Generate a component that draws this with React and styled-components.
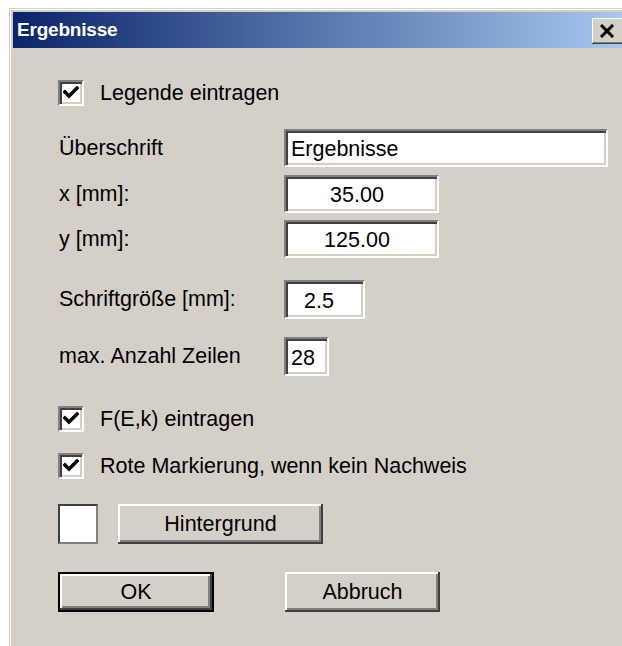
import React from 'react';
import styled, { createGlobalStyle } from 'styled-components';

const GlobalStyle = createGlobalStyle`
  html, body {
    margin: 0;
    padding: 0;
    background: #ffffff;
    overflow: hidden;
  }
  body {
    font-family: "Liberation Sans", Arial, sans-serif;
  }
`;

const Window = styled.div`
  margin: 8px 0 0 9px;
  width: 624px;
  height: calc(100vh - 8px);
  box-sizing: border-box;
  background: #d4d0c8;
  border: 1px solid #d4d0c8;
  border-bottom: none;
  box-shadow: inset 1px 1px #ffffff;
  padding: 3px 3px 0;
`;

const TitleBar = styled.div`
  height: 36px;
  display: flex;
  align-items: center;
  justify-content: space-between;
  padding: 0 3px 0 4px;
  background: linear-gradient(to right, #0a246a, #a6caf0);
`;

const Title = styled.span`
  color: #ffffff;
  font-weight: bold;
  font-size: 19px;
  letter-spacing: -0.2px;
`;

const CloseButton = styled.div`
  width: 34px;
  height: 26px;
  margin-top: 1px;
  box-sizing: border-box;
  background: #d4d0c8;
  display: flex;
  align-items: center;
  justify-content: flex-start;
  padding-left: 7px;
  box-shadow: inset -1px -1px #404040, inset 1px 1px #ffffff,
    inset -2px -2px #808080;
`;

const Content = styled.div`
  display: flex;
  flex-direction: column;
  padding: 32px 0 0 45px;
  font-size: 21.5px;
  color: #000000;
`;

const Row = styled.div`
  display: flex;
  align-items: center;
  margin-top: ${(p) => p.$gap || 0}px;
  height: ${(p) => p.$height || 38}px;
`;

const FieldRow = styled(Row)`
  display: grid;
  grid-template-columns: 226px auto;
`;

const Label = styled.span`
  padding-left: 1px;
  white-space: nowrap;
`;

const Box = styled.div`
  width: 26px;
  height: 26px;
  box-sizing: border-box;
  background: #ffffff;
  border: 2px solid;
  border-color: #808080 #ffffff #ffffff #808080;
  box-shadow: inset 2px 2px #404040, inset -2px -2px #d4d0c8;
  display: flex;
  align-items: center;
  justify-content: center;
  flex-shrink: 0;
`;

const CheckText = styled.span`
  margin-left: 16px;
  white-space: nowrap;
`;

const Field = styled.input`
  width: ${(p) => p.$width}px;
  height: ${(p) => p.$height || 38}px;
  box-sizing: border-box;
  margin: 0;
  background: #ffffff;
  border: 2px solid;
  border-color: #808080 #ffffff #ffffff #808080;
  box-shadow: inset 2px 2px #404040, inset -2px -2px #d4d0c8;
  font-family: "Liberation Sans", Arial, sans-serif;
  font-size: 21.5px;
  color: #000000;
  text-align: ${(p) => p.$align || 'left'};
  padding: 3px ${(p) => p.$padRight || 2}px 0 5px;
  outline: none;
`;

const Swatch = styled.div`
  width: 40px;
  height: 40px;
  box-sizing: border-box;
  background: #ffffff;
  border: 2px solid;
  border-color: #404040 #808080 #808080 #404040;
`;

const Button = styled.div`
  width: ${(p) => p.$width}px;
  height: 40px;
  box-sizing: border-box;
  margin-left: ${(p) => p.$offset || 0}px;
  background: #d4d0c8;
  display: flex;
  align-items: center;
  justify-content: center;
  border: ${(p) => (p.$default ? '2px solid #000000' : 'none')};
  box-shadow: inset -2px -2px #404040, inset 2px 2px #ffffff,
    inset -4px -4px #808080;
  white-space: nowrap;
`;

const Check = () => (
  <svg width="16" height="14" viewBox="0 0 16 14">
    <path d="M2 6 L6 10 L14 2" stroke="#000" strokeWidth="3.4" fill="none" strokeLinecap="square" />
  </svg>
);

const CheckRow = ({ label, gap }) => (
  <Row $gap={gap} $height={26}>
    <Box>
      <Check />
    </Box>
    <CheckText>{label}</CheckText>
  </Row>
);

const App = () => (
  <>
    <GlobalStyle />
    <Window>
      <TitleBar>
        <Title>Ergebnisse</Title>
        <CloseButton>
          <svg width="16" height="14" viewBox="0 0 16 14">
            <path d="M2 1 L14 13 M14 1 L2 13" stroke="#000" strokeWidth="3" />
          </svg>
        </CloseButton>
      </TitleBar>
      <Content>
        <CheckRow label="Legende eintragen" />
        <FieldRow $gap={23}>
          <Label>Überschrift</Label>
          <Field $width={324} readOnly defaultValue="Ergebnisse" />
        </FieldRow>
        <FieldRow $gap={8}>
          <Label>x [mm]:</Label>
          <Field $width={155} $align="center" $padRight={14} readOnly defaultValue="35.00" />
        </FieldRow>
        <FieldRow $gap={7}>
          <Label>y [mm]:</Label>
          <Field $width={155} $align="center" $padRight={14} readOnly defaultValue="125.00" />
        </FieldRow>
        <FieldRow $gap={22} $height={39}>
          <Label>Schriftgröße [mm]:</Label>
          <Field $width={81} $height={39} $align="center" $padRight={16} readOnly defaultValue="2.5" />
        </FieldRow>
        <FieldRow $gap={18} $height={39}>
          <Label>max. Anzahl Zeilen</Label>
          <Field $width={45} $height={39} readOnly defaultValue="28" />
        </FieldRow>
        <CheckRow label="F(E,k) eintragen" gap={30} />
        <CheckRow label="Rote Markierung, wenn kein Nachweis" gap={21} />
        <Row $gap={24} $height={42}>
          <Swatch />
          <Button $width={205} $offset={20}>Hintergrund</Button>
        </Row>
        <Row $gap={27} $height={40}>
          <Button $width={156} $default>OK</Button>
          <Button $width={155} $offset={71}>Abbruch</Button>
        </Row>
      </Content>
    </Window>
  </>
);

export default App;
